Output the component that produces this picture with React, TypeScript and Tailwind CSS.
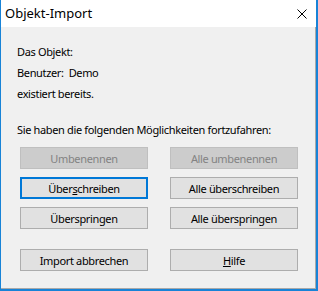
import React from 'react';

const font = { fontFamily: '"Noto Sans", "Liberation Sans", sans-serif' };

type BtnProps = {
  children: React.ReactNode;
  disabled?: boolean;
  focused?: boolean;
};

const DialogButton: React.FC<BtnProps> = ({ children, disabled, focused }) => {
  let cls = 'border border-[#adadad] bg-[#e1e1e1] text-black';
  if (disabled) cls = 'border border-[#bfbfbf] bg-[#cccccc] text-[#838383]';
  if (focused) cls = 'border-2 border-[#0078d7] bg-[#e1e1e1] text-black';
  return (
    <button
      className={`h-[22px] w-[128px] flex items-center justify-center text-[11px] tracking-[-0.35px] leading-none ${cls}`}
    >
      {children}
    </button>
  );
};

export default function App() {
  return (
    <div
      className="w-[318px] h-[291px] flex flex-col bg-[#1883d7] pl-[1px] pr-[2px] pb-[2px] overflow-hidden"
      style={font}
    >
      {/* title bar */}
      <div className="h-[27px] bg-white flex items-center justify-between pl-[4px] pr-[9px]">
        <span className="text-[13px] text-black">Objekt-Import</span>
        <svg width="10" height="10" viewBox="0 0 10 10">
          <path d="M0.5 0.5 L9.5 9.5 M9.5 0.5 L0.5 9.5" stroke="#000" strokeWidth="1" />
        </svg>
      </div>

      {/* client area */}
      <div className="flex-1 bg-[#f0f0f0] border-r border-b border-[#a9a9a9] pl-[16px] pt-[14px] text-[11px] tracking-[-0.35px] text-black">
        <div className="leading-[21px]">Das Objekt:</div>
        <div className="leading-[21px] whitespace-pre">Benutzer:  Demo</div>
        <div className="leading-[21px]">existiert bereits.</div>
        <div className="leading-[21px] mt-[15px]">Sie haben die folgenden Möglichkeiten fortzufahren:</div>

        <div className="ml-[3px] mt-[7px] grid grid-cols-[128px_128px] gap-x-[22px] gap-y-[8px]">
          <DialogButton disabled>Umbenennen</DialogButton>
          <DialogButton disabled>Alle umbenennen</DialogButton>
          <DialogButton focused>
            Über<span className="underline">s</span>chreiben
          </DialogButton>
          <DialogButton>Alle überschreiben</DialogButton>
          <DialogButton>Überspringen</DialogButton>
          <DialogButton>Alle überspringen</DialogButton>
          <div className="mt-[12px]">
            <DialogButton>Import abbrechen</DialogButton>
          </div>
          <div className="mt-[12px]">
            <DialogButton>
              <span className="underline">H</span>ilfe
            </DialogButton>
          </div>
        </div>
      </div>
    </div>
  );
}
